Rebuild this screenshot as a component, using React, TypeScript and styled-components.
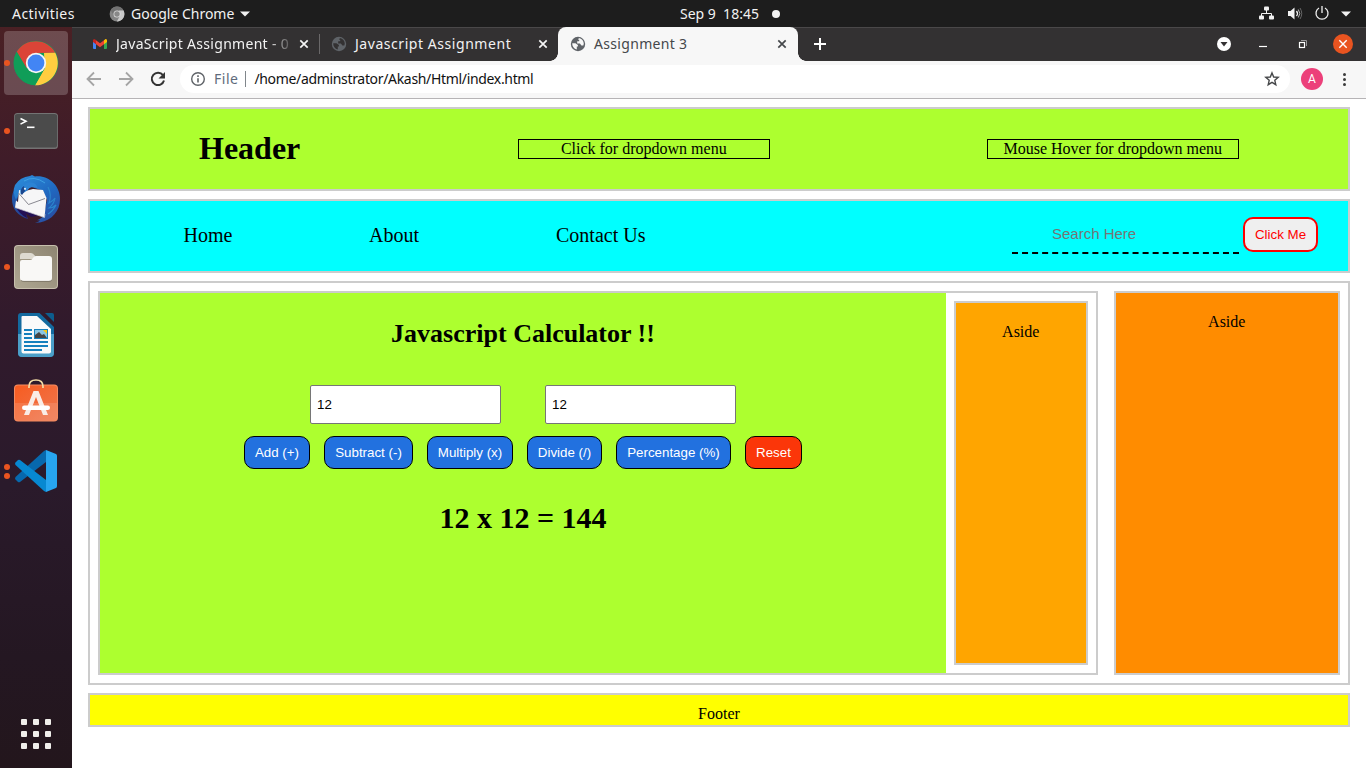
import React from "react";
import styled, { createGlobalStyle } from "styled-components";

const GlobalStyle = createGlobalStyle`
  * { box-sizing: border-box; }
  body { margin: 0; overflow: hidden; background: #fff; }
  h1, h2, p { margin: 0; }
`;

const UI_FONT = '"Noto Sans", "Open Sans", sans-serif';
const PAGE_FONT = '"Liberation Serif", "Times New Roman", serif';
const FORM_FONT = '"Liberation Sans", Arial, sans-serif';

const Desktop = styled.div`
  width: 1366px;
  height: 768px;
  display: flex;
  flex-direction: column;
  overflow: hidden;
`;

const UiText = styled.span<{ $size?: number; $spacing?: number; $color?: string }>`
  font-family: ${UI_FONT};
  font-size: ${(p) => p.$size ?? 14}px;
  letter-spacing: ${(p) => p.$spacing ?? 0}px;
  color: ${(p) => p.$color ?? "#f2f2f2"};
  line-height: 20px;
  white-space: pre;
`;

/* ---------- system bar ---------- */

const SystemBar = styled.header`
  height: 27px;
  flex: none;
  background: #1d1d1d;
  display: grid;
  grid-template-columns: 109px 571px 1fr auto;
  align-items: center;
`;

const BarGroup = styled.div<{ $gap?: number; $left?: number; $right?: number }>`
  display: flex;
  align-items: center;
  gap: ${(p) => p.$gap ?? 0}px;
  padding-left: ${(p) => p.$left ?? 0}px;
  padding-right: ${(p) => p.$right ?? 0}px;
`;

const NoticeDot = styled.span`
  width: 8px;
  height: 8px;
  border-radius: 50%;
  background: #f2f2f2;
`;

const Workspace = styled.div`
  display: flex;
  flex: 1;
  min-height: 0;
`;

/* ---------- dock ---------- */

const Dock = styled.aside`
  width: 72px;
  flex: none;
  background: linear-gradient(#4a2024 0%, #3f1c29 18%, #311a2c 40%, #2a1a2b 62%, #241722 85%, #23161c 100%);
  display: flex;
  flex-direction: column;
  padding: 4px 4px 13px;
  gap: 4px;
`;

const DockItem = styled.div<{ $active?: boolean }>`
  height: 64px;
  border-radius: 4px;
  background: ${(p) => (p.$active ? "rgba(255,255,255,0.2)" : "transparent")};
  display: grid;
  grid-template-columns: 6px 52px 6px;
  align-items: center;
  justify-items: center;
`;

const Markers = styled.div`
  display: flex;
  flex-direction: column;
  gap: 3px;
`;

const Marker = styled.i`
  width: 6px;
  height: 6px;
  border-radius: 50%;
  background: #e95420;
`;

const AppsGrid = styled.div`
  margin: auto auto 6px;
  display: grid;
  grid-template-columns: repeat(3, 6px);
  gap: 6px;
`;

const AppsCell = styled.i`
  width: 6px;
  height: 6px;
  border-radius: 1px;
  background: #f0efeb;
`;

/* ---------- browser ---------- */

const Browser = styled.section`
  flex: 1;
  min-width: 0;
  display: flex;
  flex-direction: column;
`;

const TabStrip = styled.div`
  height: 34px;
  flex: none;
  background: #333132;
  box-shadow: inset 0 1px #4a4849;
  display: flex;
  align-items: stretch;
`;

const Tab = styled.div<{ $width: number; $left: number; $right: number; $active?: boolean }>`
  width: ${(p) => p.$width}px;
  padding: 0 ${(p) => p.$right}px 0 ${(p) => p.$left}px;
  display: flex;
  align-items: center;
  gap: 8px;
  position: relative;
  background: ${(p) => (p.$active ? "#f7f7f7" : "transparent")};
  border-radius: 8px 8px 0 0;
  ${(p) =>
    p.$active &&
    `
    &::before, &::after {
      content: "";
      position: absolute;
      bottom: 0;
      width: 8px;
      height: 8px;
    }
    &::before { left: -8px; background: radial-gradient(circle at 0 0, transparent 7.5px, #f7f7f7 8px); }
    &::after { right: -8px; background: radial-gradient(circle at 100% 0, transparent 7.5px, #f7f7f7 8px); }
  `}
`;

const TabTitle = styled.div<{ $fade?: boolean }>`
  flex: 1;
  min-width: 0;
  display: flex;
  ${(p) =>
    p.$fade &&
    `
    margin-right: -6px;
    mask-image: linear-gradient(90deg, #000 85%, transparent 101%);
  `}
`;

const TabDivider = styled.i`
  width: 1px;
  height: 20px;
  align-self: center;
  background: #6a6869;
`;

const WindowControls = styled.div`
  margin-left: auto;
  display: flex;
  align-items: center;
  padding-right: 13px;
`;

const Toolbar = styled.div`
  height: 38px;
  flex: none;
  background: #f7f7f7;
  border-bottom: 1px solid #b6b4b6;
  display: flex;
  align-items: center;
  padding: 0 12px 1px 12px;
`;

const NavIcons = styled.div`
  display: flex;
  flex: none;
  gap: 12px;
  width: 96px;
`;

const AddressBar = styled.div`
  width: 1110px;
  flex: none;
  height: 28px;
  border-radius: 14px;
  background: #fff;
  display: flex;
  align-items: center;
  padding: 0 10px;
`;

const AddressDivider = styled.i`
  width: 1px;
  height: 16px;
  margin: 0 8px 0 7px;
  background: #80868b;
`;

const PushRight = styled.div`
  margin-left: auto;
  display: flex;
`;

const Avatar = styled.div`
  width: 22px;
  height: 22px;
  flex: none;
  margin: 0 12px 0 11px;
  border-radius: 50%;
  background: #ec407a;
  color: #fff;
  font: 12px/22px Roboto, sans-serif;
  text-align: center;
`;

/* ---------- page ---------- */

const Page = styled.main`
  flex: 1;
  background: #fff;
  font-family: ${PAGE_FONT};
  font-size: 16px;
  line-height: 18px;
  color: #000;
  padding: 8px 16px;
  display: flex;
  flex-direction: column;
  gap: 8px;
`;

const Panel = styled.section<{ $color?: string; $height?: number }>`
  border: 2px solid #ccc;
  background: ${(p) => p.$color ?? "#fff"};
  ${(p) => p.$height && `height: ${p.$height}px;`}
`;

const HeaderPanel = styled(Panel)`
  display: grid;
  grid-template-columns: 319px 252px 252px;
  align-items: center;
  padding-left: 109px;
`;

const Title = styled.h1`
  font-size: 32px;
  line-height: 36px;
  padding-bottom: 2px;
`;

const MenuTrigger = styled.div<{ $indent?: number }>`
  width: 252px;
  height: 20px;
  border: 1px solid #000;
  padding-right: 0.5px;
  text-align: center;
  margin-left: ${(p) => p.$indent ?? 0}px;
`;

const NavPanel = styled(Panel)`
  display: flex;
  align-items: flex-start;
  padding-left: 93.5px;
`;

const NavLink = styled.a<{ $width: number }>`
  width: ${(p) => p.$width}px;
  margin-top: 23px;
  font-size: 20px;
  line-height: 23px;
`;

const SearchInput = styled.input`
  width: 227px;
  height: 39px;
  margin-top: 14px;
  padding: 0 0 0 40px;
  border: 0;
  border-bottom: 2px dashed #000;
  background: transparent;
  outline: none;
  font: 15px ${FORM_FONT};
  &::placeholder { color: #757575; }
`;

const SearchButton = styled.button`
  width: 75px;
  height: 35px;
  margin: 16px 0 0 4px;
  padding: 0;
  border: 2px solid red;
  border-radius: 10px;
  background: #efefef;
  color: red;
  font: 13.333px ${FORM_FONT};
`;

const MainPanel = styled(Panel)`
  padding: 8px;
  display: flex;
  gap: 16px;
`;

const Section = styled(Panel)`
  width: 1000px;
  display: flex;
`;

const Calculator = styled.div`
  width: 846px;
  background: greenyellow;
  display: flex;
  flex-direction: column;
  align-items: center;
`;

const CalcTitle = styled.h2`
  margin-top: 26px;
  font-size: 26px;
  line-height: 30px;
`;

const Fields = styled.div`
  margin-top: 36px;
  display: flex;
  gap: 44px;
`;

const Field = styled.input`
  width: 191px;
  height: 39px;
  padding: 0 6px;
  border: 1px solid #767676;
  border-radius: 2px;
  background: #fff;
  font: 13.333px ${FORM_FONT};
`;

const Actions = styled.div`
  margin-top: 12px;
  display: flex;
  gap: 14px;
`;

const Action = styled.button<{ $width: number; $danger?: boolean }>`
  width: ${(p) => p.$width}px;
  height: 33px;
  padding: 0;
  border: 1px solid #000;
  border-radius: 10px;
  background: ${(p) => (p.$danger ? "#fb3609" : "#2271df")};
  color: #fff;
  font: 13.333px ${FORM_FONT};
  white-space: nowrap;
`;

const Result = styled.p`
  margin-top: 32px;
  font-size: 30px;
  line-height: 34px;
  font-weight: bold;
`;

const InnerAside = styled(Panel)`
  width: 134px;
  margin: 8px;
  padding: 20px 0.5px 0 0;
  text-align: center;
`;

const OuterAside = styled(Panel)`
  width: 226px;
  padding: 20px 0.5px 0 0;
  text-align: center;
`;

const Footer = styled(Panel)`
  padding-top: 10px;
  text-align: center;
`;

/* ---------- icons ---------- */

const ChromeIcon = () => (
  <svg width="46" height="46" viewBox="0 0 46 46">
    <circle cx="23" cy="23" r="22.3" fill="#109d58" />
    <path d="M3.7 11.8A22.3 22.3 0 0 1 42.3 12.8L23 13 13.3 28.6Z" fill="#db4437" />
    <path d="M42.3 12.8A22.3 22.3 0 0 1 22 45.3L31.7 28.5 31 13Z" fill="#ffcd40" />
    <path d="M3.7 11.8L13.6 28 22 33 31.5 28.5 22 45.3A22.3 22.3 0 0 1 3.7 11.8Z" fill="#109d58" />
    <circle cx="23" cy="23" r="10.2" fill="#f5f5f5" />
    <circle cx="23" cy="23" r="8.4" fill="#4285f4" />
  </svg>
);

const MonoChromeIcon = () => (
  <svg width="16" height="16" viewBox="0 0 16 16">
    <circle cx="8" cy="8" r="7.4" fill="#858585" />
    <path d="M1.6 4.2A7.4 7.4 0 0 1 14.6 4.6H8L5 9.8Z" fill="#727272" />
    <path d="M14.6 4.6A7.4 7.4 0 0 1 7.8 15.4L11 9.8 10 4.6Z" fill="#c9c9c9" />
    <circle cx="8" cy="8" r="3.5" fill="#ddd" />
    <circle cx="8" cy="8" r="2.7" fill="#888" />
  </svg>
);

const TerminalIcon = () => (
  <svg width="46" height="38" viewBox="0 0 46 38">
    <rect x="1" y="1" width="44" height="36" rx="3.5" fill="#737373" />
    <rect x="1.8" y="2" width="42.4" height="33.6" rx="2.8" fill="#4b4b4b" />
    <path d="M7.5 6.5L13 9.3 7.5 12.1" fill="none" stroke="#fff" strokeWidth="1.6" />
    <path d="M14 15.3h7.5" stroke="#fff" strokeWidth="1.6" />
  </svg>
);

const ThunderbirdIcon = () => (
  <svg width="50" height="50" viewBox="0 0 50 50">
    <defs>
      <linearGradient id="bird" x1="0.2" y1="0" x2="0.9" y2="1">
        <stop offset="0" stopColor="#2b8ad8" />
        <stop offset="0.5" stopColor="#2068c0" />
        <stop offset="1" stopColor="#2a4a9e" />
      </linearGradient>
      <linearGradient id="tail" x1="0" y1="0" x2="1" y2="1">
        <stop offset="0" stopColor="#1f62b5" />
        <stop offset="1" stopColor="#2a3585" />
      </linearGradient>
    </defs>
    <path d="M5 13L9 15 6 27 4 33 14 38 17 45C7 42 1 35 1 25Q1 18 5 13Z" fill="url(#tail)" />
    <path d="M5 33L30 41 20 43 15 39 16 44Q8 40 5 33Z" fill="#231056" />
    <path d="M4 11Q9 3 19 2l2-1 3 1.500C38 1 49 12 49 25c0 12-8 21-20 23.500l-5 .3q4-1 5-2.500l-3 0q5-2 7-5.500l3-15-4-9-12-4-9 6-2-1-4 8Q1 18 4 11Z" fill="url(#bird)" />
    <path d="M8 16L14 17 22 15 32 16 35.500 24 33.500 43.500 4 33.500 5 26.500 7 28Z" fill="#f6f6f7" />
    <path d="M4 33.500L33.500 43.500 34 40" fill="none" stroke="#c8c8d0" strokeWidth="0.700" />
    <path d="M7.500 19L17.500 30.500 34 24.500" fill="none" stroke="#7c7c84" strokeWidth="0.900" />
    <path d="M9.500 20q-1-6 3-9 4-4 10-2 3 1 4 5-4-2-8 0-3 4-9 6Z" fill="#2b83d4" />
    <path d="M10 20q-1-6 3-8l1 5-3 4Z" fill="#1b468c" />
    <circle cx="14" cy="14.800" r="1.100" fill="#d9e7f5" />
    <path d="M13 7Q23 1 34 9" fill="none" stroke="#40a4e4" strokeWidth="0.900" />
    <path d="M37 13q4 8 1 16 4-2 6-5-1 6-6 10 4 0 7-3-3 6-8 9" fill="none" stroke="#2b86cd" strokeWidth="1.200" />
  </svg>
);

const FilesIcon = () => (
  <svg width="46" height="46" viewBox="0 0 46 46">
    <defs>
      <linearGradient id="folderBack" x1="1" y1="0" x2="0" y2="1">
        <stop offset="0" stopColor="#8f8673" />
        <stop offset="1" stopColor="#aea691" />
      </linearGradient>
    </defs>
    <rect x="1" y="1" width="44" height="44" rx="4" fill="#c7c0ad" />
    <rect x="2" y="2" width="42" height="42" rx="3" fill="url(#folderBack)" />
    <path d="M7 12q0-3 3-3h8q2 0 4 3l2 3H7Z" fill="#dedad0" />
    <path d="M7 18q0-2 2-2h8c3 0 3-4 6-4h13q3 0 3 3v19q0 3-3 3H10q-3 0-3-3Z" fill="#f9f8f6" />
    <path d="M8 36.5q1 .9 3 .9h25q2 0 2.6-1" stroke="#777062" fill="none" strokeWidth="0.8" />
  </svg>
);

const WriterIcon = () => (
  <svg width="38" height="46" viewBox="0 0 38 46">
    <path d="M4 1h18.500L37 15v26q0 4-4 4H5q-4 0-4-4V4q0-3 3-3Z" fill="#136a9f" />
    <path d="M1 22h36v19q0 4-4 4H5q-4 0-4-4Z" fill="#4b9fc8" />
    <path d="M5.500 4H20l14 13v22.500q0 2-2 2H6.500q-2 0-2-2V5q0-1 1-1Z" fill="#fafafa" />
    <path d="M28 1h7q2 0 2 2v7Z" fill="#0d5d8d" />
    <path d="M7 17.900h8M7 22h8M7 26h8M7 30h24M7 34h24M7 38h18" stroke="#1680bd" strokeWidth="2" />
    <path d="M17 17h14v10H17Z" fill="#1680bd" />
    <path d="M18 18h12v8H18Z" fill="#8ac5e3" />
    <path d="M18 26v-3l4-3 3 3 2-1 3 4Z" fill="#454545" />
    <path d="M26 18h4v4Z" fill="#f7c713" />
  </svg>
);

const SoftwareIcon = () => (
  <svg width="46" height="48" viewBox="0 0 46 48">
    <defs>
      <linearGradient id="bag" x1="0" y1="0" x2="1" y2="1">
        <stop offset="0" stopColor="#f75c20" />
        <stop offset="1" stopColor="#ee7750" />
      </linearGradient>
    </defs>
    <rect x="1" y="5.500" width="44" height="37" rx="4" fill="#f58b60" />
    <rect x="2" y="6.500" width="42" height="35" rx="3" fill="url(#bag)" />
    <path d="M2 24h42v14.500q0 3-3 3H5q-3 0-3-3Z" fill="#fff" opacity="0.12" />
    <path d="M16 9V7.500q0-6.500 7-6.500t7 6.500V9" fill="none" stroke="#f3dca6" strokeWidth="1.700" />
    <path d="M20.500 12h5L35 36h-5l-7-18-7 18h-5Z" fill="#f9ece6" />
    <rect x="9" y="26.500" width="28" height="4.500" rx="2.200" fill="#fff" />
  </svg>
);

const CodeIcon = () => (
  <svg width="44" height="44" viewBox="0 0 44 44">
    <path d="M32 1v12L6 33q-1 .6-2 0l-2.500-2.500q-1-1 0-2.500L30 2Z" fill="#0768ad" />
    <path d="M1.500 13.500L4 11q1-.7 2 0l26 20v12l-2-1L1.500 16q-1-1.200 0-2.500Z" fill="#0788d1" />
    <path d="M32 1l10 4q1 .5 1 2v30q0 1.500-1 2l-10 4Z" fill="#27a5ef" />
  </svg>
);

const GmailIcon = () => (
  <svg width="16" height="16" viewBox="0 0 16 16">
    <path d="M1 4v8q0 1 1 1h2V6Z" fill="#4285f4" />
    <path d="M12 6v7h2q1 0 1-1V4Z" fill="#34a853" />
    <path d="M12 4.200l1-.8c1-.7 2 0 2 1.200V6l-3 2.300Z" fill="#fbbc04" />
    <path d="M1 4.600C1 3 2.500 2.800 3.300 3.600L4 4.200v4.100L1 6Z" fill="#c5221f" />
    <path d="M4 4.200l4 3 4-3v4.100l-4 3-4-3Z" fill="#ea4335" />
  </svg>
);

const GlobeIcon = ({ hole }: { hole: string }) => (
  <svg width="16" height="16" viewBox="0 0 16 16">
    <circle cx="8" cy="8" r="7.2" fill="#5f6368" />
    <path d="M2.200 7.300h3.300l2.400 1.800v1.400H6.800v2.900C4 12.900 2.100 10.500 2.200 7.300Z" fill={hole} />
    <path d="M8.900 2.100c3 .5 4.900 2.900 4.900 5.600l-.5 1.800h-1.900L9.900 7.400H7.200V5.300h2V3.700H8.100Z" fill={hole} />
  </svg>
);

const CloseIcon = ({ color }: { color: string }) => (
  <svg width="16" height="16" viewBox="0 0 16 16">
    <path d="M4.300 4.300l7.400 7.400M11.700 4.300l-7.400 7.400" stroke={color} strokeWidth="1.700" />
  </svg>
);

const NewTabIcon = () => (
  <svg width="44" height="34" viewBox="0 0 44 34">
    <path d="M22 11v12M16 17h12" stroke="#fff" strokeWidth="2" />
  </svg>
);

const WindowIcons = () => (
  <svg width="142" height="34" viewBox="0 0 142 34">
    <circle cx="13" cy="17" r="7" fill="#fff" />
    <path d="M9.500 15h7L13 19.500Z" fill="#333132" />
    <path d="M48 19.500h8" stroke="#fff" strokeWidth="1.200" />
    <path d="M90 13.500h5.500V19" fill="none" stroke="#99989a" strokeWidth="1" />
    <rect x="88.500" y="15.500" width="5" height="5" fill="none" stroke="#fff" strokeWidth="1.200" />
    <circle cx="132" cy="17" r="10" fill="#e95420" />
    <path d="M128.300 13.300l7.400 7.400M135.700 13.300l-7.400 7.400" stroke="#fff" strokeWidth="1.400" />
  </svg>
);

const ArrowIcon = ({ forward }: { forward?: boolean }) => (
  <svg width="20" height="20" viewBox="0 0 20 20">
    <path
      d={forward ? "M3 10h13M10 3.500l6.500 6.500-6.500 6.500" : "M17 10H4M10 3.500L3.500 10l6.500 6.500"}
      fill="none"
      stroke="#a5a5a5"
      strokeWidth="1.800"
    />
  </svg>
);

const ReloadIcon = () => (
  <svg width="20" height="20" viewBox="0 0 20 20">
    <path d="M15 6.200A6.200 6.200 0 1 0 16 11.500" fill="none" stroke="#333" strokeWidth="2" />
    <path d="M17 3v6.500h-6.500Z" fill="#333" />
  </svg>
);

const InfoIcon = () => (
  <svg width="16" height="16" viewBox="0 0 16 16">
    <circle cx="8" cy="8" r="6.300" fill="none" stroke="#5f6368" strokeWidth="1.400" />
    <path d="M8 7.200v4.300M8 4.300v1.600" stroke="#5f6368" strokeWidth="1.600" />
  </svg>
);

const StarIcon = () => (
  <svg width="16" height="16" viewBox="0 0 16 16">
    <path
      d="M8 1.900l1.700 4.100 4.500.4-3.400 2.900 1 4.400L8 11.400l-3.800 2.300 1-4.400-3.400-2.900 4.500-.4Z"
      fill="none"
      stroke="#454749"
      strokeWidth="1.400"
    />
  </svg>
);

const MoreIcon = () => (
  <svg width="18" height="18" viewBox="0 0 18 18" fill="#3c3c3c">
    <circle cx="9.500" cy="4.500" r="1.500" />
    <circle cx="9.500" cy="9.500" r="1.500" />
    <circle cx="9.500" cy="14.500" r="1.500" />
  </svg>
);

const CaretIcon = () => (
  <svg width="10" height="6" viewBox="0 0 10 6">
    <path d="M0 .5h10L5 5.500Z" fill="#f2f2f2" />
  </svg>
);

const NetworkIcon = () => (
  <svg width="18" height="16" viewBox="0 0 18 16">
    <path d="M8.500 4v4M3.500 11V7.500h10V11" fill="none" stroke="#f2f2f2" strokeWidth="1" />
    <g fill="#f2f2f2">
      <rect x="6" y="0.500" width="5" height="4" rx="1" />
      <rect x="1" y="9.500" width="5" height="4" rx="1" />
      <rect x="11" y="9.500" width="5" height="4" rx="1" />
    </g>
  </svg>
);

const VolumeIcon = () => (
  <svg width="16" height="16" viewBox="0 0 16 16">
    <path d="M1 5h2.500L7.500 1.500v12l-4-3.500H1Z" fill="#f2f2f2" />
    <path d="M9.500 5q2 2.500 0 5" fill="none" stroke="#f2f2f2" strokeWidth="1.300" />
    <path d="M11.300 3.500q3 4 0 8" fill="none" stroke="#bbb" strokeWidth="1" />
    <path d="M13 2q3.500 5.500 0 11" fill="none" stroke="#666" strokeWidth="1" />
  </svg>
);

const PowerIcon = () => (
  <svg width="16" height="16" viewBox="0 0 16 16">
    <path d="M5 2a6 6 0 1 0 6 0M8 0v7" fill="none" stroke="#f2f2f2" strokeWidth="1.300" />
  </svg>
);

/* ---------- data ---------- */

const dockApps = [
  { name: "chrome", icon: <ChromeIcon />, windows: 1, active: true },
  { name: "terminal", icon: <TerminalIcon />, windows: 1 },
  { name: "mail", icon: <ThunderbirdIcon />, windows: 0 },
  { name: "files", icon: <FilesIcon />, windows: 1 },
  { name: "writer", icon: <WriterIcon />, windows: 0 },
  { name: "software", icon: <SoftwareIcon />, windows: 0 },
  { name: "code", icon: <CodeIcon />, windows: 2 },
];

const actions = [
  { label: "Add (+)", width: 66 },
  { label: "Subtract (-)", width: 89 },
  { label: "Multiply (x)", width: 86 },
  { label: "Divide (/)", width: 75 },
  { label: "Percentage (%)", width: 115 },
  { label: "Reset", width: 57, danger: true },
];

export default function App() {
  return (
    <Desktop>
      <GlobalStyle />
      <SystemBar>
        <BarGroup $left={12}>
          <UiText $spacing={0.45}>Activities</UiText>
        </BarGroup>
        <BarGroup $gap={6}>
          <MonoChromeIcon />
          <UiText>Google Chrome</UiText>
          <CaretIcon />
        </BarGroup>
        <BarGroup $gap={13}>
          <UiText>Sep 9  18:45</UiText>
          <NoticeDot />
        </BarGroup>
        <BarGroup $gap={11} $right={15}>
          <NetworkIcon />
          <VolumeIcon />
          <PowerIcon />
          <CaretIcon />
        </BarGroup>
      </SystemBar>

      <Workspace>
        <Dock>
          {dockApps.map((app) => (
            <DockItem key={app.name} $active={app.active}>
              <Markers>
                {Array.from({ length: app.windows }, (_, i) => (
                  <Marker key={i} />
                ))}
              </Markers>
              {app.icon}
            </DockItem>
          ))}
          <AppsGrid>
            {Array.from({ length: 9 }, (_, i) => (
              <AppsCell key={i} />
            ))}
          </AppsGrid>
        </Dock>

        <Browser>
          <TabStrip>
            <Tab $width={247} $left={20} $right={7}>
              <GmailIcon />
              <TabTitle $fade>
                <UiText $spacing={0.3}>JavaScript Assignment - 0</UiText>
              </TabTitle>
              <CloseIcon color="#f5f5f5" />
            </Tab>
            <TabDivider />
            <Tab $width={238} $left={11} $right={7}>
              <GlobeIcon hole="#333132" />
              <TabTitle>
                <UiText $spacing={0.55}>Javascript Assignment</UiText>
              </TabTitle>
              <CloseIcon color="#f5f5f5" />
            </Tab>
            <Tab $width={240} $left={12} $right={8} $active>
              <GlobeIcon hole="#f7f7f7" />
              <TabTitle>
                <UiText $spacing={0.32} $color="#45484b">Assignment 3</UiText>
              </TabTitle>
              <CloseIcon color="#45484b" />
            </Tab>
            <NewTabIcon />
            <WindowControls>
              <WindowIcons />
            </WindowControls>
          </TabStrip>

          <Toolbar>
            <NavIcons>
              <ArrowIcon />
              <ArrowIcon forward />
              <ReloadIcon />
            </NavIcons>
            <AddressBar>
              <BarGroup $gap={8}>
                <InfoIcon />
                <UiText $spacing={0.5} $color="#5f6b7c">File</UiText>
              </BarGroup>
              <AddressDivider />
              <UiText $spacing={-0.33} $color="#111">/home/adminstrator/Akash/Html/index.html</UiText>
              <PushRight>
                <StarIcon />
              </PushRight>
            </AddressBar>
            <Avatar>A</Avatar>
            <MoreIcon />
          </Toolbar>

          <Page>
            <HeaderPanel $color="greenyellow" $height={84}>
              <Title>Header</Title>
              <MenuTrigger>Click for dropdown menu</MenuTrigger>
              <MenuTrigger $indent={217}>Mouse Hover for dropdown menu</MenuTrigger>
            </HeaderPanel>

            <NavPanel $color="aqua" $height={74}>
              <NavLink $width={185.5}>Home</NavLink>
              <NavLink $width={187}>About</NavLink>
              <NavLink $width={456}>Contact Us</NavLink>
              <SearchInput placeholder="Search Here" />
              <SearchButton>Click Me</SearchButton>
            </NavPanel>

            <MainPanel $height={404}>
              <Section>
                <Calculator>
                  <CalcTitle>Javascript Calculator !!</CalcTitle>
                  <Fields>
                    <Field defaultValue="12" />
                    <Field defaultValue="12" />
                  </Fields>
                  <Actions>
                    {actions.map((a) => (
                      <Action key={a.label} $width={a.width} $danger={a.danger}>
                        {a.label}
                      </Action>
                    ))}
                  </Actions>
                  <Result>12 x 12 = 144</Result>
                </Calculator>
                <InnerAside $color="orange">Aside</InnerAside>
              </Section>
              <OuterAside $color="darkorange">Aside</OuterAside>
            </MainPanel>

            <Footer $color="yellow" $height={34}>
              Footer
            </Footer>
          </Page>
        </Browser>
      </Workspace>
    </Desktop>
  );
}
